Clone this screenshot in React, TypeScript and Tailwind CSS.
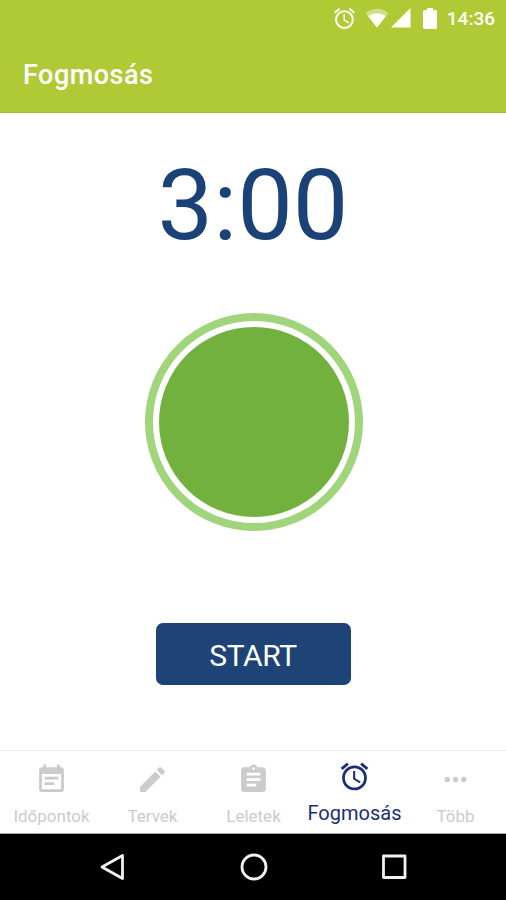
import type { ReactNode } from "react";
import { MdAlarm, MdAssignment, MdEdit, MdEventNote, MdMoreHoriz } from "react-icons/md";

const tabs = [
  { label: "Időpontok", icon: MdEventNote },
  { label: "Tervek", icon: MdEdit },
  { label: "Leletek", icon: MdAssignment },
  { label: "Fogmosás", icon: MdAlarm, active: true },
  { label: "Több", icon: MdMoreHoriz },
];

const StatusBar = () => (
  <div className="flex h-9 items-center justify-end pr-[11px] text-white">
    <MdAlarm size={25} className="mr-[8px]" />
    {/* Wifi */}
    <svg width="24" height="20" viewBox="0 0 24 20" className="mr-[2px]">
      <path d="M0.5 5Q12 -3.5 23.5 5L12 19.5Z" fill="currentColor" opacity="0.4" />
      <path d="M3 8Q12 2.5 21 8L12 19.5Z" fill="currentColor" />
    </svg>
    {/* Signal */}
    <svg width="20" height="20" viewBox="0 0 20 20" className="mr-[12px]">
      <path d="M0 19.5L19.5 0V19.5Z" fill="currentColor" />
    </svg>
    {/* Battery */}
    <svg width="14" height="21" viewBox="0 0 14 21" className="mr-[10px]">
      <path d="M4 0H10V2H12.5Q14 2 14 3.5V19.5Q14 21 12.5 21H1.5Q0 21 0 19.5V3.5Q0 2 1.5 2H4Z" fill="currentColor" />
    </svg>
    <span className="text-[19px] font-medium leading-none">14:36</span>
  </div>
);

const Header = () => (
  <header className="h-[113px] border-b border-[#a3ba35] bg-[#b0ca36]">
    <StatusBar />
    <h1 className="flex h-[79px] items-center pl-[23px] text-[27px] font-medium tracking-[0.5px] text-white">
      Fogmosás
    </h1>
  </header>
);

const Timer = () => (
  <main className="flex h-[637px] flex-col items-center">
    <div className="mt-[42px] h-[100px] text-[99px] leading-[100px] text-[#1a4277]">3:00</div>
    <div className="mt-[58px] ml-px size-[218px] rounded-full border-8 border-[#a0d57b] p-[6px]">
      <div className="size-full rounded-full bg-[#72b13d]" />
    </div>
    <button className="mt-[92px] h-[62px] w-[195px] rounded-[7px] bg-[#1d4377] pt-[2px] text-[30px] tracking-[-0.4px] text-white">
      START
    </button>
  </main>
);

const TabBar = () => (
  <nav className="grid h-[84px] grid-cols-5 border-y border-t-[#ececec] border-b-[#aaaaaa] pl-px">
    {tabs.map(({ label, icon: Icon, active }) => (
      <a
        key={label}
        href="#"
        className={
          active
            ? "flex flex-col items-center pt-[9px] text-[#1a2e75]"
            : "flex flex-col items-center pt-[12px] text-[#cbcbcb]"
        }
      >
        <Icon size={33} />
        <span
          className={
            active
              ? "mt-[8px] whitespace-nowrap text-[20px] leading-6"
              : "mt-[8px] whitespace-nowrap text-[17px] leading-6"
          }
        >
          {label}
        </span>
      </a>
    ))}
  </nav>
);

const NavIcon = ({ children }: { children: ReactNode }) => (
  <svg width="28" height="28" viewBox="0 0 28 28" fill="none" stroke="#f1f1f1" strokeWidth="2.8" strokeLinejoin="round">
    {children}
  </svg>
);

const SystemNav = () => (
  <div className="flex h-[66px] justify-center gap-[112.5px] bg-black pt-[19px] pl-px">
    <NavIcon>
      <path d="M23.5 2.5V25.5L3 14Z" />
    </NavIcon>
    <NavIcon>
      <circle cx="14" cy="14" r="12" />
    </NavIcon>
    <NavIcon>
      <rect x="3.5" y="3" width="21.5" height="21.5" />
    </NavIcon>
  </div>
);

const App = () => (
  <div className="h-[900px] w-[506px] overflow-hidden bg-white font-[Roboto,sans-serif]">
    <Header />
    <Timer />
    <TabBar />
    <SystemNav />
  </div>
);

export default App;
